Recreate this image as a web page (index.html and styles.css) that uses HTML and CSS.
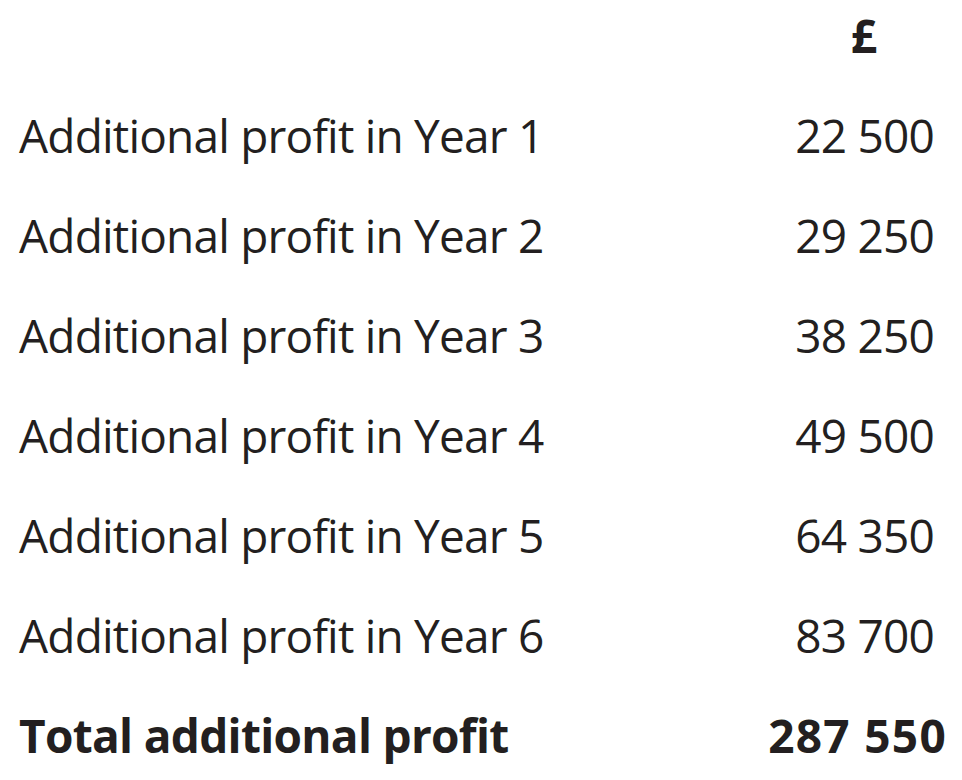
FILE: index.html
```html
<!DOCTYPE html>
<html lang="en">
<head>
<meta charset="utf-8">
<title>Additional profit</title>
<link rel="stylesheet" href="styles.css">
</head>
<body>
<div class="table">
  <div class="row head">
    <span class="label"></span>
    <span class="value currency">£</span>
  </div>
  <div class="row">
    <span class="label">Additional profit in Year 1</span>
    <span class="value">22 500</span>
  </div>
  <div class="row">
    <span class="label">Additional profit in Year 2</span>
    <span class="value">29 250</span>
  </div>
  <div class="row">
    <span class="label">Additional profit in Year 3</span>
    <span class="value">38 250</span>
  </div>
  <div class="row">
    <span class="label">Additional profit in Year 4</span>
    <span class="value">49 500</span>
  </div>
  <div class="row">
    <span class="label">Additional profit in Year 5</span>
    <span class="value">64 350</span>
  </div>
  <div class="row">
    <span class="label">Additional profit in Year 6</span>
    <span class="value">83 700</span>
  </div>
  <div class="row total">
    <span class="label">Total additional profit</span>
    <span class="value">287 550</span>
  </div>
</div>
</body>
</html>
```
FILE: styles.css
```css
html, body {
  margin: 0;
  padding: 0;
  background: #ffffff;
}

body {
  font-family: "Open Sans", "Noto Sans", sans-serif;
  font-size: 46px;
  color: #231f20;
  width: 962px;
  height: 780px;
  overflow: hidden;
}

.table {
  display: flex;
  flex-direction: column;
  padding: 0 28px 0 19px;
}

.row {
  display: grid;
  grid-template-columns: 1fr 140px;
  height: 100px;
  line-height: 70px;
  letter-spacing: -0.8px;
  white-space: nowrap;
}

.value {
  justify-self: end;
  text-align: right;
}

.currency {
  width: 140px;
  text-align: center;
  font-weight: 700;
  letter-spacing: 0;
}

.total {
  font-weight: 700;
  letter-spacing: -0.7px;
}

.total .value {
  letter-spacing: 1.3px;
  margin-right: -13px;
}
```
